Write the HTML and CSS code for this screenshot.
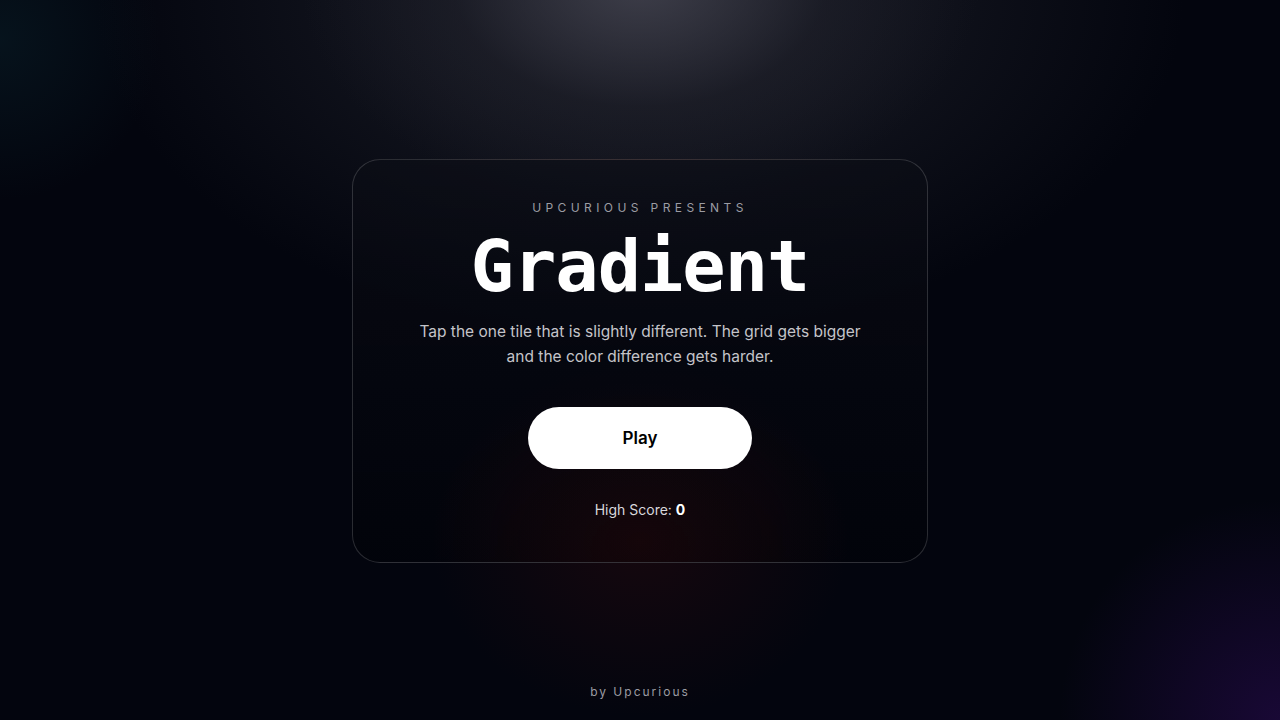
FILE: index.html
```html
<!DOCTYPE html>
<html lang="en">
<head>
  <meta charset="UTF-8" />
  <title>Gradient</title>
  <link rel="stylesheet" href="styles.css">
</head>
<body>

<main class="stage">
  <section class="card">
    <p class="eyebrow">Upcurious presents</p>
    <h1 class="title">Gradient</h1>
    <p class="intro">Tap the one tile that is slightly different. The grid gets bigger and the color difference gets harder.</p>
    <button class="play-btn" id="play-btn">Play</button>
    <p class="score">High Score: <strong id="high-score">0</strong></p>
  </section>
</main>

<footer class="credit">by Upcurious</footer>

</body>
</html>
```

FILE: styles.css
```css
* {
  box-sizing: border-box;
}

html, body {
  margin: 0;
  height: 100%;
}

body {
  display: flex;
  flex-direction: column;
  font-family: Inter, "Noto Sans", sans-serif;
  color: #fff;
  background:
    radial-gradient(ellipse 340px 230px at 50% -20px, rgba(70, 70, 82, 0.8), rgba(40, 40, 50, 0.3) 55%, transparent 100%),
    radial-gradient(ellipse 680px 420px at 50% 0, rgba(36, 38, 48, 0.8), transparent 80%),
    radial-gradient(circle 200px at 0 40px, rgba(10, 36, 46, 0.45), transparent 80%),
    radial-gradient(circle 260px at 100% 100%, rgba(34, 10, 70, 0.7), transparent 85%),
    radial-gradient(ellipse 260px 220px at 50% 75%, rgba(40, 10, 14, 0.5), transparent 80%),
    #03050e;
}

.stage {
  flex: 1;
  display: flex;
  align-items: center;
  justify-content: center;
  padding-top: 38px;
}

.card {
  width: 576px;
  padding: 40px 60px 44px;
  border: 1px solid rgba(255, 255, 255, 0.16);
  border-radius: 28px;
  background:
    radial-gradient(ellipse 260px 200px at 50% 95%, rgba(30, 8, 10, 0.6), transparent 80%),
    linear-gradient(180deg, rgba(12, 14, 22, 0.6), rgba(2, 3, 10, 0.75));
  text-align: center;
}

.eyebrow {
  margin: 0;
  font-size: 12px;
  letter-spacing: 4.4px;
  text-transform: uppercase;
  color: #9b9ca3;
  line-height: 16px;
}

.title {
  margin: 8px 0 0;
  font-family: "DejaVu Sans Mono", "Liberation Mono", monospace;
  font-weight: bold;
  font-size: 72px;
  line-height: 84px;
  letter-spacing: -1px;
}

.intro {
  margin: 11px auto 0;
  max-width: 450px;
  font-size: 15.5px;
  line-height: 25px;
  color: #c4c4c9;
}

.play-btn {
  display: block;
  margin: 38px auto 0;
  width: 224px;
  height: 62px;
  border: none;
  border-radius: 31px;
  background: #fff;
  color: #000;
  font-family: Inter, "Noto Sans", sans-serif;
  font-size: 17px;
  font-weight: 600;
  cursor: pointer;
}

.score {
  margin: 32px 0 0;
  font-size: 14px;
  color: #d8d8dc;
}

.score strong {
  color: #fff;
}

.credit {
  padding: 0 0 21px;
  text-align: center;
  font-size: 12px;
  letter-spacing: 2px;
  color: #9b9ca3;
}
```
